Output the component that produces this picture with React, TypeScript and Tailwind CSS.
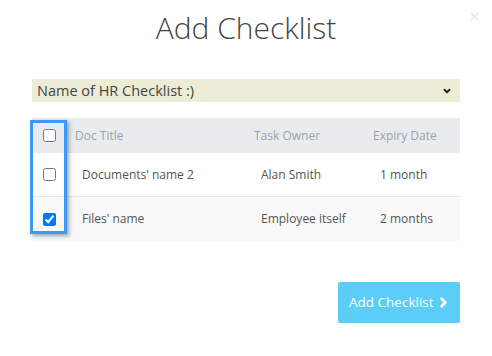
import { ChevronDown, ChevronRight, X } from "lucide-react";

interface Item {
  id: number;
  title: string;
  owner: string;
  expiry: string;
  checked: boolean;
}

const items: Item[] = [
  { id: 1, title: "Documents' name 2", owner: "Alan Smith", expiry: "1 month", checked: false },
  { id: 2, title: "Files' name", owner: "Employee itself", expiry: "2 months", checked: true },
];

export default function App() {
  return (
    <div
      className="relative w-[492px] h-[356px] bg-white text-[#555]"
      style={{ fontFamily: "'Open Sans', 'Noto Sans', sans-serif" }}
    >
      <button className="absolute right-[11px] top-[10px] text-[#c8c8c8]">
        <X className="w-[13px] h-[13px]" strokeWidth={1.5} />
      </button>

      <h1 className="pt-[8px] text-center text-[30px] font-light text-[#444] leading-[40px]">
        Add Checklist
      </h1>

      <div className="px-[32px] mt-[31px]">
        {/* Select */}
        <div className="flex items-center justify-between h-[23px] bg-[#edecd6] pl-[5px] pr-[8px]">
          <span className="text-[14.5px] text-[#444]">Name of HR Checklist :)</span>
          <ChevronDown className="w-[10px] h-[10px] text-[#222]" strokeWidth={4.5} />
        </div>

        {/* Table */}
        <div className="relative mt-[16px]">
          <div className="flex items-center h-[35px] bg-[#e9ecef] text-[12px] text-[#9aa2ab]">
            <div className="w-[43px] pl-[11px] flex items-center">
              <input type="checkbox" className="w-[13px] h-[13px]" readOnly />
            </div>
            <div className="w-[179px]">Doc Title</div>
            <div className="w-[119px]">Task Owner</div>
            <div>Expiry Date</div>
          </div>
          {items.map((item, i) => (
            <div
              key={item.id}
              className={`flex items-center h-[44px] text-[12px] text-[#555] ${
                i === 0 ? "bg-white border-b border-[#e6e6e6]" : "bg-[#f9f9f9]"
              }`}
            >
              <div className="w-[50px] pl-[11px] flex items-center">
                <input
                  type="checkbox"
                  className="w-[13px] h-[13px] accent-[#0075ff]"
                  defaultChecked={item.checked}
                />
              </div>
              <div className="w-[179px]">{item.title}</div>
              <div className="w-[119px]">{item.owner}</div>
              <div>{item.expiry}</div>
            </div>
          ))}

          {/* highlight annotation */}
          <div className="absolute left-[-2px] top-[2px] w-[37px] h-[114px] border-[3px] border-[#3b99fc] shadow-[2px_2px_4px_rgba(0,0,0,0.35)] pointer-events-none" />
        </div>

        <div className="flex justify-end mt-[41px]">
          <button className="flex items-center gap-[2px] w-[122px] h-[41px] pl-[11px] rounded-[2px] bg-[#5bcdf6] text-white text-[13.5px]">
            Add Checklist
            <ChevronRight className="w-[15px] h-[15px]" strokeWidth={4.5} />
          </button>
        </div>
      </div>
    </div>
  );
}
